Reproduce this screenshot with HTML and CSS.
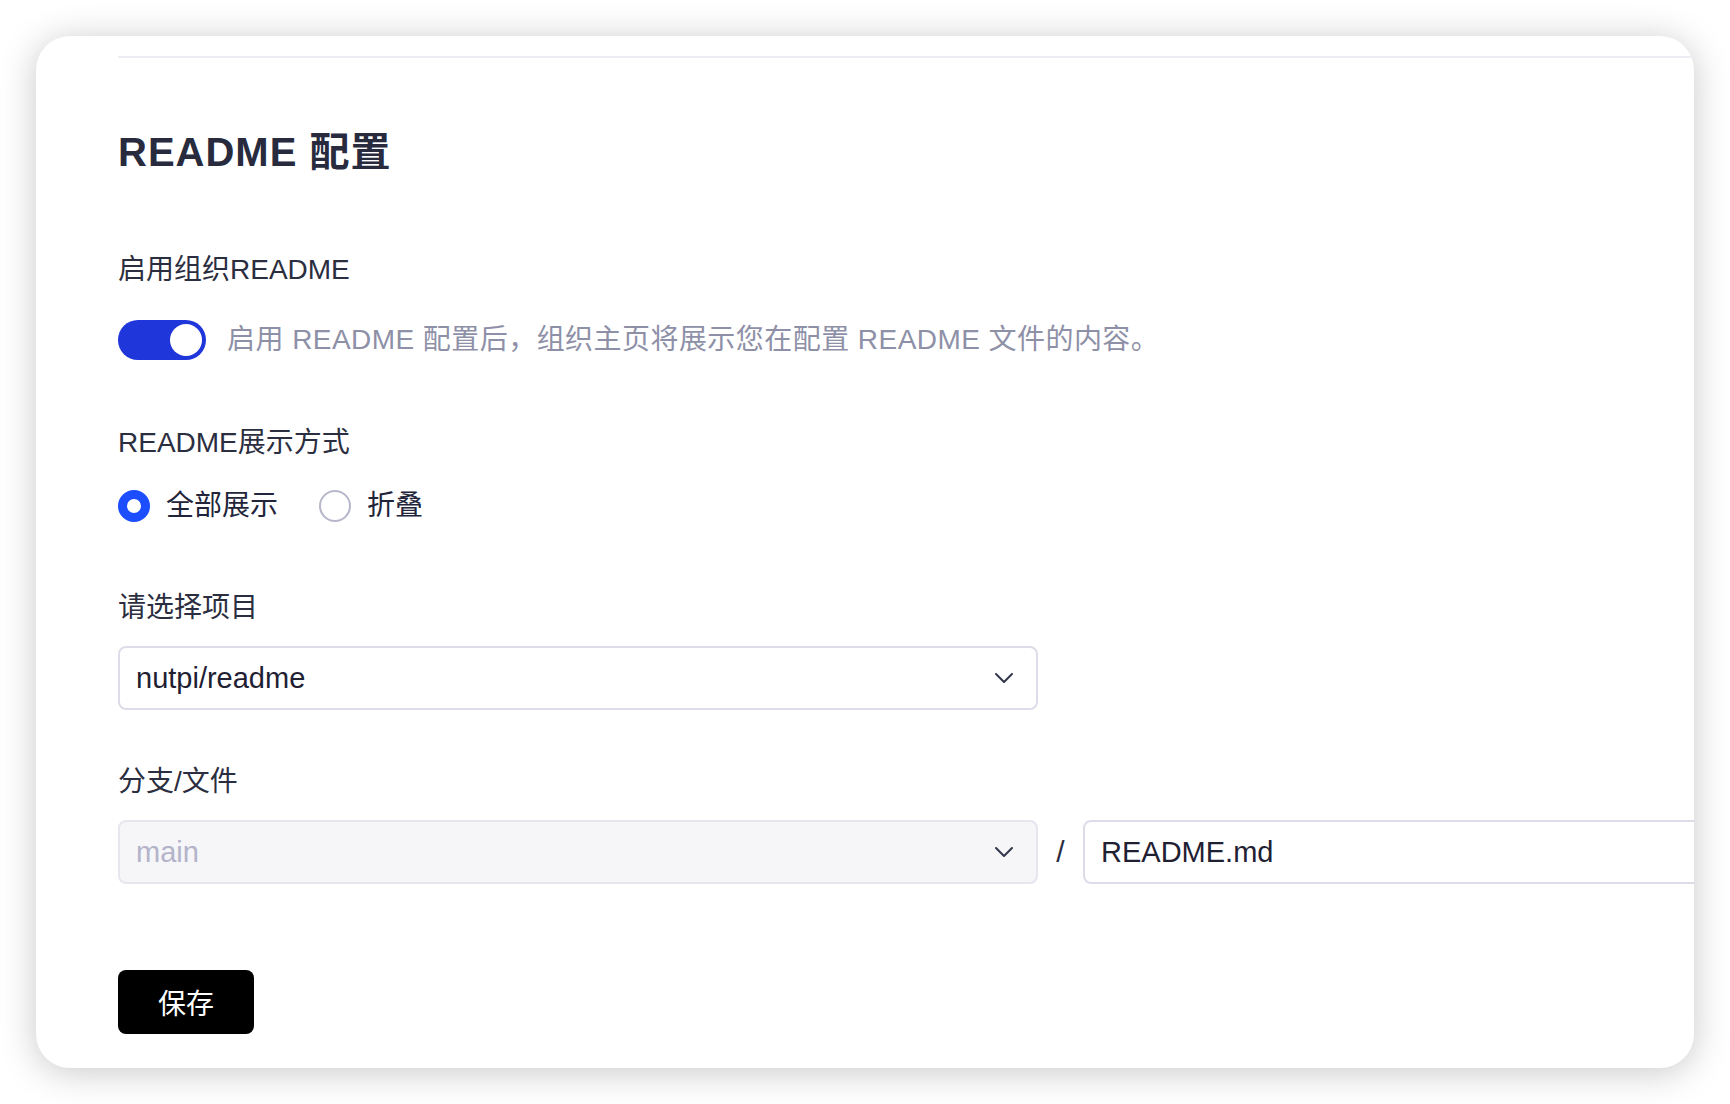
FILE: index.html
```html
<!DOCTYPE html>
<html>
	<head>
		<meta charset="utf-8" />
		<title>README 配置</title>
<link rel="stylesheet" href="styles.css">
	</head>
	<body>
	<div class="card">
		<div class="divider"></div>
		<h1 class="title">README 配置</h1>

		<div class="field first">
			<div class="label">启用组织README</div>
			<div class="switch-row">
				<span class="switch on"><span class="knob"></span></span>
				<span class="hint">启用 README 配置后，组织主页将展示您在配置 README 文件的内容。</span>
			</div>
		</div>

		<div class="field second">
			<div class="label">README展示方式</div>
			<div class="radios">
				<label class="radio"><span class="dot checked"></span>全部展示</label>
				<label class="radio"><span class="dot"></span>折叠</label>
			</div>
		</div>

		<div class="field">
			<div class="label">请选择项目</div>
			<div class="select">
				<span class="value">nutpi/readme</span>
				<svg class="arrow" width="20" height="12" viewBox="0 0 20 12"><polyline points="2,2 10,10 18,2" fill="none" stroke="#33364a" stroke-width="2" stroke-linecap="round" stroke-linejoin="round"/></svg>
			</div>
		</div>

		<div class="field branch">
			<div class="label">分支/文件</div>
			<div class="branch-row">
				<div class="select disabled">
					<span class="value placeholder">main</span>
					<svg class="arrow" width="20" height="12" viewBox="0 0 20 12"><polyline points="2,2 10,10 18,2" fill="none" stroke="#33364a" stroke-width="2" stroke-linecap="round" stroke-linejoin="round"/></svg>
				</div>
				<span class="slash">/</span>
				<div class="input"><span class="value">README.md</span></div>
			</div>
		</div>

		<button class="save">保存</button>
	</div>
	</body>
</html>
```

FILE: styles.css
```css
*{margin: 0;padding: 0;box-sizing: border-box;}
body{background: #fff;padding: 36px;font-family: "Liberation Sans","Noto Sans CJK SC",sans-serif;color: #2a2d3f;}
.card{width: 1658px;height: 1032px;background: #fff;border-radius: 34px;box-shadow: 0 4px 36px rgba(0,0,0,0.22);overflow: hidden;padding: 20px 0 0 82px;}
.divider{height: 2px;background: #ececf4;}
.title{margin-top: 66px;font-size: 40px;line-height: 56px;font-weight: bold;color: #282b3e;letter-spacing: 1px;}
.field{margin-top: 62px;}
.field.first{margin-top: 70px;}
.field.second{margin-top: 63px;}
.field.branch{margin-top: 52px;}
.label{font-size: 28px;line-height: 40px;color: #2b2e40;}
/*开关*/
.switch-row{display: flex;align-items: center;margin-top: 30px;}
.switch{width: 88px;height: 40px;border-radius: 20px;background: #c9cad8;position: relative;flex-shrink: 0;}
.switch.on{background: #1f36da;}
.knob{position: absolute;top: 4px;left: 4px;width: 32px;height: 32px;border-radius: 50%;background: #fff;}
.switch.on .knob{left: 52px;}
.hint{margin-left: 21px;font-size: 28px;line-height: 40px;color: #8e90a7;white-space: nowrap;letter-spacing: 0.45px;}
/*单选*/
.radios{display: flex;align-items: center;margin-top: 23px;gap: 41px;}
.radio{display: flex;align-items: center;font-size: 28px;line-height: 40px;color: #22243a;}
.dot{width: 32px;height: 32px;border-radius: 50%;border: 2px solid #b6b7ca;margin-right: 16px;}
.dot.checked{border: 9px solid #1c4dff;}
/*下拉*/
.select,.input{display: flex;align-items: center;justify-content: space-between;height: 64px;border: 2px solid #dddde9;border-radius: 8px;padding: 0 22px 0 16px;background: #fff;margin-top: 18px;flex-shrink: 0;}
.select{width: 920px;}
.value{font-size: 29px;color: #1f2133;}
.select.disabled{background: #f6f6f9;border-color: #e6e6ef;}
.placeholder{color: #b3b3ca;}
.field.branch + .save{margin-top: 86px;}
.branch-row{display: flex;align-items: center;margin-top: 18px;}
.branch-row .select,.branch-row .input{margin-top: 0;}
.slash{width: 45px;flex-shrink: 0;text-align: center;font-size: 30px;color: #2a2d3f;}
.input{width: 920px;}
.save{display: block;width: 136px;height: 64px;border: none;border-radius: 8px;background: #000;color: #fff;font-size: 28px;font-family: "Liberation Sans","Noto Sans CJK SC",sans-serif;}
.field.branch{margin-bottom: 0;}
```
